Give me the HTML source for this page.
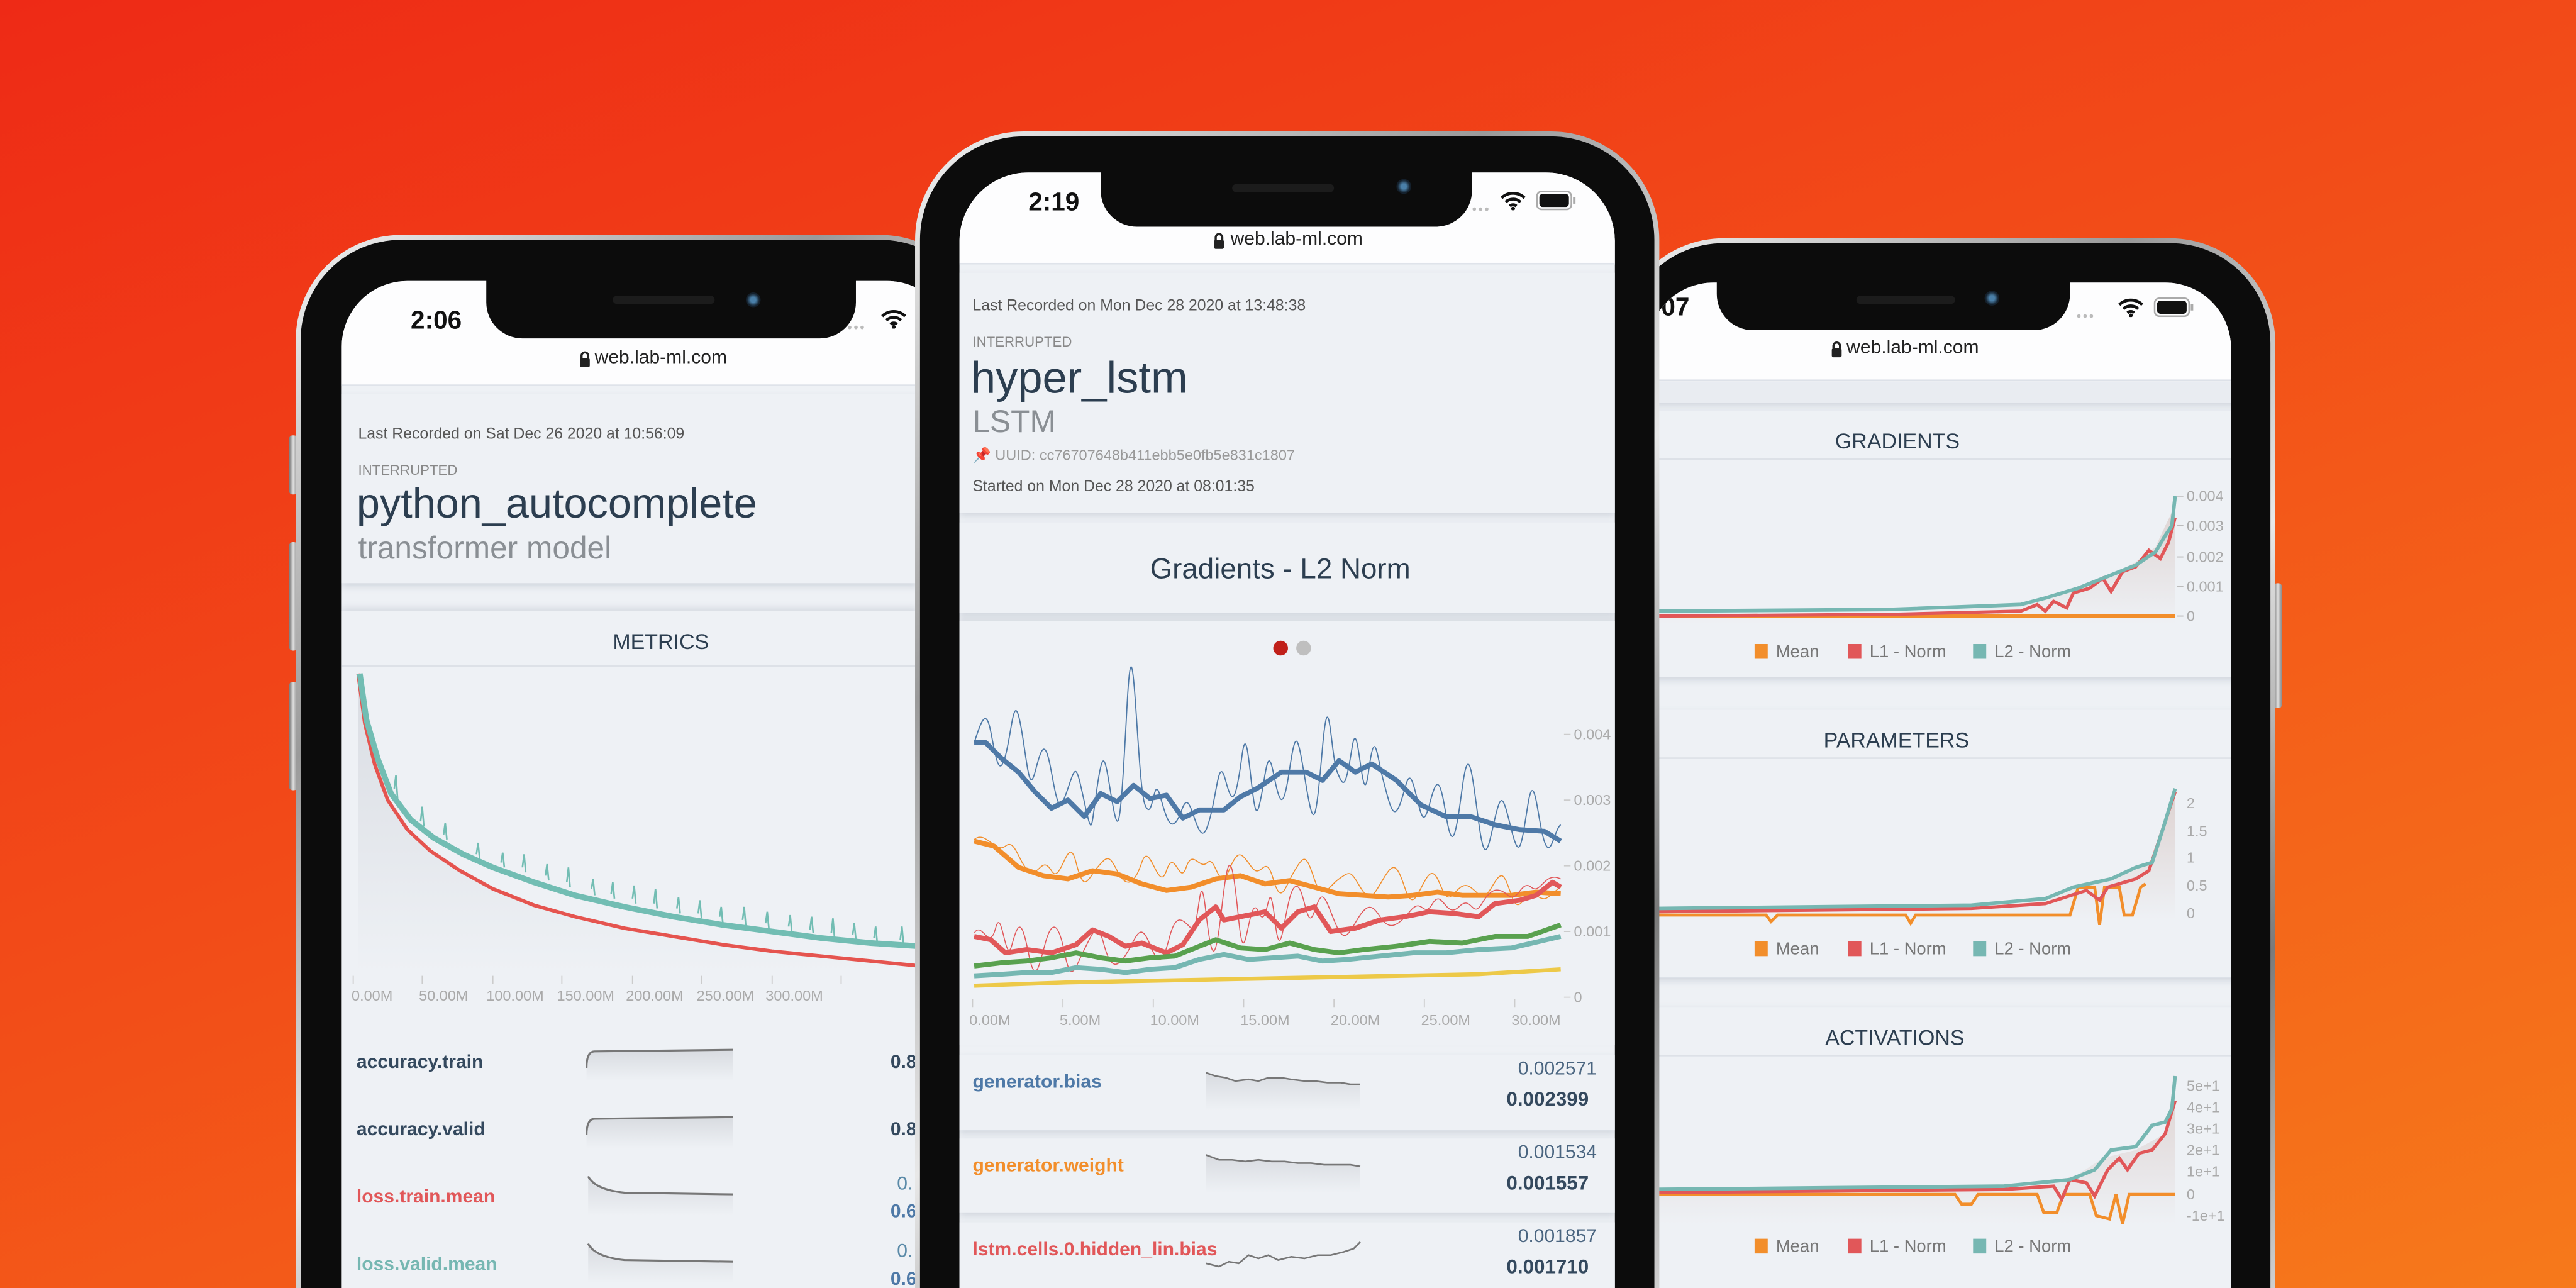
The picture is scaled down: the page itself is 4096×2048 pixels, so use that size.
<!DOCTYPE html>
<html><head><meta charset="utf-8"><style>
*{margin:0;padding:0;box-sizing:border-box}
html,body{width:4096px;height:2048px;overflow:hidden}
body{background:linear-gradient(160deg,#ee2a16 0%,#f24c18 45%,#f6791b 100%);font-family:"Liberation Sans",sans-serif}
#s{position:absolute;left:0;top:0;width:1568px;height:784px;overflow:hidden;transform:scale(2.612245);transform-origin:0 0}
.ph{position:absolute;background:linear-gradient(135deg,#f2f2f2,#9a9a9a 30%,#e8e8e8 55%,#7a7a7a 80%,#d0d0d0)}
.bz{position:absolute;left:3px;top:3px;right:3px;bottom:0;background:#0c0c0c}
.sc{position:absolute;overflow:hidden;background:#eef1f5}
.g{position:absolute;left:0;top:0;width:1568px;height:784px}
.t{position:absolute;white-space:nowrap;line-height:1}
.card{position:absolute;background:#eef1f5;box-shadow:0 2px 4px rgba(120,130,150,.25)}
.wh{position:absolute;background:#fdfdfe;border-bottom:1px solid #dfe3ea}
.notch{position:absolute;background:#0c0c0c;border-radius:0 0 22px 22px}
.cam{position:absolute;width:9px;height:9px;border-radius:50%;background:radial-gradient(circle,#4a7fa8 25%,#14202c 60%)}
.spk{position:absolute;height:5px;border-radius:3px;background:#1c1c1c}
.btn{position:absolute;background:linear-gradient(90deg,#777,#ddd,#888);border-radius:2px}
.lg{position:absolute;font-size:10.5px;color:#777;white-space:nowrap;line-height:1}
.lg i{display:inline-block;width:8px;height:9px;margin:0 5px -1px 0}
.ax{font-size:9px;fill:#aaa;font-family:"Liberation Sans",sans-serif}
</style></head><body><div id="s">

<div class="btn" style="left:176px;top:265px;width:5px;height:36px"></div>
<div class="btn" style="left:176px;top:330px;width:5px;height:66px"></div>
<div class="btn" style="left:176px;top:415px;width:5px;height:66px"></div>
<div class="btn" style="left:1384px;top:355px;width:5px;height:76px"></div>

<!-- LEFT PHONE -->
<div class="ph" style="left:180px;top:143px;width:420px;height:641px;border-radius:64px 64px 0 0"><div class="bz" style="border-radius:61px 61px 0 0"></div></div>
<div class="sc" style="left:208px;top:171px;width:372px;height:613px;border-radius:40px 40px 0 0">
<div class="g" style="left:-208px;top:-171px">
 <div class="wh" style="left:208px;top:171px;width:380px;height:64px"></div>
 <div class="t" style="left:250px;top:188px;font-size:15.5px;font-weight:bold;color:#111">2:06</div>
 <div class="t" style="left:512px;top:196px;font-size:8px;color:#bbb;letter-spacing:1px">••••</div>
 <svg style="position:absolute;left:536px;top:188px" width="16" height="12" viewBox="0 0 16 12"><path d="M1 4.5a10 10 0 0 1 14 0M3.5 7a6.5 6.5 0 0 1 9 0M6 9.4a3 3 0 0 1 4 0" stroke="#111" stroke-width="1.8" fill="none"/><circle cx="8" cy="11" r="1.2" fill="#111"/></svg>
 <svg style="position:absolute;left:352px;top:213px" width="8" height="11" viewBox="0 0 8 11"><path d="M2 5V3.5a2 2 0 0 1 4 0V5" stroke="#222" stroke-width="1.3" fill="none"/><rect x="1" y="5" width="6" height="5.5" rx="1" fill="#222"/></svg>
 <div class="t" style="left:362px;top:213px;font-size:11.5px;color:#222">web.lab-ml.com</div>
 <div class="card" style="left:208px;top:240px;width:350px;height:115px"></div>
 <div class="t" style="left:218px;top:260px;font-size:9.5px;color:#555">Last Recorded on Sat Dec 26 2020 at 10:56:09</div>
 <div class="t" style="left:218px;top:282px;font-size:8.5px;color:#888">INTERRUPTED</div>
 <div class="t" style="left:217px;top:295px;font-size:25.5px;color:#2c3e50">python_autocomplete</div>
 <div class="t" style="left:218px;top:325px;font-size:19px;color:#8a8f94">transformer model</div>
 <div class="card" style="left:208px;top:372px;width:350px;height:430px;box-shadow:0 -2px 4px rgba(120,130,150,.2)"></div>
 <div class="t" style="left:373px;top:384px;font-size:13px;color:#2c3e50">METRICS</div>
 <div style="position:absolute;left:208px;top:405px;width:350px;height:1px;background:#dde1e7"></div>
 <svg style="position:absolute;left:0;top:0" width="1568" height="784">
  <defs><linearGradient id="lf" x1="0" y1="0" x2="0" y2="1"><stop offset="0" stop-color="#d9dce2"/><stop offset="1" stop-color="#eef1f5"/></linearGradient></defs>
  <path d="M218 410 L222 440 L228 465 L236 487 L248 505 L262 518 L280 530 L300 541 L325 551 L350 558 L380 565 L410 570 L440 575 L470 579 L500 582 L530 585 L560 588 L560 592 L218 592Z" fill="url(#lf)"/>
  <path d="M218 410 L222 440 L228 465 L236 487 L248 505 L262 518 L280 530 L300 541 L325 551 L350 558 L380 565 L410 570 L440 575 L470 579 L500 582 L530 585 L560 588" stroke="#e5544f" stroke-width="2.2" fill="none"/>
  <path d="M219 410 L223 438 L230 462 L238 483 L250 499 L264 510 L282 520 L300 528 L325 537 L350 545 L380 552 L410 558 L440 563 L470 567 L500 571 L530 574 L560 576" stroke="#72bdb3" stroke-width="3.5" fill="none"/>
  <path d="M240 480 l1 -8 l1 14 M256 500 l1 -9 l1 12 M270 508 l1 -7 l1 10 M290 520 l1 -7 l1 10 M305 525 l1 -6 l1 9 M318 528 l1 -8 l1 11 M332 533 l1 -7 l1 10 M345 537 l1 -9 l1 12 M360 541 l1 -6 l1 10 M372 544 l1 -7 l1 10 M385 547 l1 -8 l1 11 M398 550 l1 -9 l1 12 M412 553 l1 -7 l1 10 M425 556 l1 -8 l1 11 M438 558 l1 -6 l1 10 M452 560 l1 -8 l1 12 M466 562 l1 -7 l1 10 M480 564 l1 -7 l1 11 M493 566 l1 -8 l1 10 M506 568 l1 -9 l1 12 M519 569 l1 -7 l1 10 M532 571 l1 -7 l1 10 M548 572 l1 -8 l1 11" stroke="#72bdb3" stroke-width="1" fill="none"/>
  <g stroke="#ccc" stroke-width=".7"><path d="M215 594v5M257 594v5M300 594v5M342 594v5M385 594v5M427 594v5M470 594v5M512 594v5"/></g>
  <g class="ax"><text x="214" y="609">0.00M</text><text x="255" y="609">50.00M</text><text x="296" y="609">100.00M</text><text x="339" y="609">150.00M</text><text x="381" y="609">200.00M</text><text x="424" y="609">250.00M</text><text x="466" y="609">300.00M</text></g>
  <defs><linearGradient id="sp" x1="0" y1="0" x2="0" y2="1"><stop offset="0" stop-color="#d8dbe0"/><stop offset="1" stop-color="#eef1f5"/></linearGradient></defs>
  <path d="M357 650 Q357 640 362 640 L446 639 L446 658 L357 658Z" fill="url(#sp)"/><path d="M357 650 Q357 640 362 640 L446 639" stroke="#777" stroke-width="1.2" fill="none"/>
  <path d="M357 691 Q357 681 362 681 L446 680 L446 699 L357 699Z" fill="url(#sp)"/><path d="M357 691 Q357 681 362 681 L446 680" stroke="#777" stroke-width="1.2" fill="none"/>
  <path d="M358 716 Q362 724 380 726 L446 727 L446 740 L358 740Z" fill="url(#sp)"/><path d="M358 716 Q362 724 380 726 L446 727" stroke="#777" stroke-width="1.2" fill="none"/>
  <path d="M358 757 Q362 765 380 767 L446 768 L446 781 L358 781Z" fill="url(#sp)"/><path d="M358 757 Q362 765 380 767 L446 768" stroke="#777" stroke-width="1.2" fill="none"/>
 </svg>
 <div class="t" style="left:217px;top:642px;font-size:11.5px;font-weight:bold;color:#34495e">accuracy.train</div>
 <div class="t" style="left:217px;top:683px;font-size:11.5px;font-weight:bold;color:#34495e">accuracy.valid</div>
 <div class="t" style="left:217px;top:724px;font-size:11.5px;font-weight:bold;color:#e15759">loss.train.mean</div>
 <div class="t" style="left:217px;top:765px;font-size:11.5px;font-weight:bold;color:#76b7b2">loss.valid.mean</div>
 <div class="t" style="left:542px;top:642px;font-size:11.5px;font-weight:bold;color:#34495e">0.8</div>
 <div class="t" style="left:542px;top:683px;font-size:11.5px;font-weight:bold;color:#34495e">0.8</div>
 <div class="t" style="left:546px;top:716px;font-size:11.5px;color:#5a8aa8">0.</div>
 <div class="t" style="left:542px;top:733px;font-size:11.5px;font-weight:bold;color:#4e79a7">0.6</div>
 <div class="t" style="left:546px;top:757px;font-size:11.5px;color:#5a8aa8">0.</div>
 <div class="t" style="left:542px;top:774px;font-size:11.5px;font-weight:bold;color:#4e79a7">0.6</div>
</div></div>
<div class="notch" style="left:296px;top:170px;width:225px;height:36px"></div>
<div class="spk" style="left:373px;top:180px;width:62px"></div>
<div class="cam" style="left:454px;top:178px"></div>

<!-- RIGHT PHONE -->
<div class="ph" style="left:985px;top:145px;width:400px;height:639px;border-radius:64px 64px 0 0"><div class="bz" style="border-radius:61px 61px 0 0"></div></div>
<div class="sc" style="left:1003px;top:172px;width:355px;height:612px;border-radius:40px 40px 0 0">
<div class="g" style="left:-1003px;top:-172px">
 <div class="wh" style="left:1003px;top:172px;width:360px;height:60px"></div>
 <div class="t" style="left:1006px;top:180px;font-size:15.5px;font-weight:bold;color:#111">:07</div>
 <div class="t" style="left:1264px;top:189px;font-size:8px;color:#bbb;letter-spacing:1px">•••</div>
 <svg style="position:absolute;left:1289px;top:181px" width="16" height="12" viewBox="0 0 16 12"><path d="M1 4.5a10 10 0 0 1 14 0M3.5 7a6.5 6.5 0 0 1 9 0M6 9.4a3 3 0 0 1 4 0" stroke="#111" stroke-width="1.8" fill="none"/><circle cx="8" cy="11" r="1.2" fill="#111"/></svg>
 <svg style="position:absolute;left:1311px;top:181px" width="25" height="12" viewBox="0 0 25 12"><rect x=".5" y=".5" width="21" height="11" rx="3" fill="none" stroke="#aaa"/><rect x="2" y="2" width="18" height="8" rx="2" fill="#111"/><rect x="22.5" y="4" width="1.5" height="4" fill="#aaa"/></svg>
 <svg style="position:absolute;left:1114px;top:207px" width="8" height="11" viewBox="0 0 8 11"><path d="M2 5V3.5a2 2 0 0 1 4 0V5" stroke="#222" stroke-width="1.3" fill="none"/><rect x="1" y="5" width="6" height="5.5" rx="1" fill="#222"/></svg>
 <div class="t" style="left:1124px;top:207px;font-size:11.5px;color:#222">web.lab-ml.com</div>
 <div class="card" style="left:1003px;top:233px;width:360px;height:12px;background:#e9ecf1"></div>
 <div class="card" style="left:1003px;top:250px;width:360px;height:162px"></div>
 <div class="t" style="left:1117px;top:262px;font-size:13px;color:#2c3e50">GRADIENTS</div>
 <div style="position:absolute;left:1003px;top:279px;width:360px;height:1px;background:#dde1e7"></div>
 <div class="card" style="left:1003px;top:432px;width:360px;height:163px"></div>
 <div class="t" style="left:1110px;top:444px;font-size:13px;color:#2c3e50">PARAMETERS</div>
 <div style="position:absolute;left:1003px;top:461px;width:360px;height:1px;background:#dde1e7"></div>
 <div class="card" style="left:1003px;top:613px;width:360px;height:190px"></div>
 <div class="t" style="left:1111px;top:625px;font-size:13px;color:#2c3e50">ACTIVATIONS</div>
 <div style="position:absolute;left:1003px;top:642px;width:360px;height:1px;background:#dde1e7"></div>
 <svg style="position:absolute;left:0;top:0" width="1568" height="784">
  <defs><linearGradient id="rf" x1="0" y1="0" x2="0" y2="1"><stop offset="0" stop-color="#d9c9c6"/><stop offset="1" stop-color="#eef1f5"/></linearGradient></defs>
  <path d="M1005 372 L1200 369 L1240 366 L1265 358 L1285 350 L1300 342 L1312 333 L1318 320 L1322 312 L1324 302 L1324 380 L1005 380Z" fill="url(#rf)" opacity=".8"/>
  <path d="M1005 375 L1324 375" stroke="#f28e2b" stroke-width="2" fill="none"/>
  <path d="M1005 375 L1150 374 L1230 372 L1240 368 L1245 372 L1250 366 L1258 370 L1262 361 L1272 358 L1280 352 L1285 360 L1292 348 L1300 345 L1308 335 L1315 340 L1320 330 L1324 315" stroke="#e15759" stroke-width="2" fill="none"/>
  <path d="M1005 372 L1150 371 L1230 368 L1245 364 L1265 358 L1285 350 L1300 344 L1312 336 L1318 326 L1322 320 L1324 302" stroke="#76b7b2" stroke-width="2.2" fill="none"/>
  <g stroke="#bbb" stroke-width=".7"><path d="M1325 302h4M1325 320h4M1325 339h4M1325 357h4M1325 375h4"/></g>
  <g class="ax"><text x="1331" y="305">0.004</text><text x="1331" y="323">0.003</text><text x="1331" y="342">0.002</text><text x="1331" y="360">0.001</text><text x="1331" y="378">0</text></g>
  <path d="M1005 553 L1200 551 L1245 547 L1262 540 L1285 535 L1300 528 L1310 525 L1318 500 L1324 480 L1324 560 L1005 560Z" fill="url(#rf)" opacity=".8"/>
  <path d="M1005 557 L1075 557 L1078 561 L1082 557 L1160 557 L1163 562 L1166 557 L1260 557 L1265 540 L1275 540 L1278 563 L1281 540 L1290 540 L1293 557 L1298 557 L1303 540 L1306 538" stroke="#f28e2b" stroke-width="1.8" fill="none"/>
  <path d="M1005 555 L1200 553 L1245 550 L1270 542 L1278 548 L1283 540 L1300 535 L1308 530 L1318 500 L1324 482" stroke="#e15759" stroke-width="2" fill="none"/>
  <path d="M1005 553 L1200 551 L1245 547 L1262 540 L1285 535 L1300 528 L1310 525 L1318 500 L1324 480" stroke="#76b7b2" stroke-width="2.2" fill="none"/>
  <g class="ax"><text x="1331" y="492">2</text><text x="1331" y="509">1.5</text><text x="1331" y="525">1</text><text x="1331" y="542">0.5</text><text x="1331" y="559">0</text></g>
  <path d="M1005 726 L1230 724 L1260 718 L1280 705 L1300 700 L1318 690 L1324 655 L1324 745 L1005 745Z" fill="url(#rf)" opacity=".8"/>
  <path d="M1005 727 L1190 727 L1194 733 L1200 733 L1204 727 L1240 727 L1244 738 L1252 738 L1256 727 L1272 727 L1276 740 L1284 742 L1288 727 L1292 745 L1296 727 L1324 727" stroke="#f28e2b" stroke-width="1.8" fill="none"/>
  <path d="M1005 726 L1220 724 L1250 722 L1255 730 L1260 718 L1270 720 L1275 728 L1283 712 L1290 705 L1295 712 L1302 702 L1310 700 L1318 690 L1324 670" stroke="#e15759" stroke-width="2" fill="none"/>
  <path d="M1005 724 L1220 722 L1260 718 L1275 712 L1285 700 L1300 698 L1310 685 L1318 683 L1322 675 L1324 655" stroke="#76b7b2" stroke-width="2.2" fill="none"/>
  <g class="ax"><text x="1331" y="664">5e+1</text><text x="1331" y="677">4e+1</text><text x="1331" y="690">3e+1</text><text x="1331" y="703">2e+1</text><text x="1331" y="716">1e+1</text><text x="1331" y="730">0</text><text x="1331" y="743">-1e+1</text></g>
 </svg>
 <div class="lg" style="left:1068px;top:392px"><i style="background:#f28e2b"></i>Mean</div>
 <div class="lg" style="left:1125px;top:392px"><i style="background:#e15759"></i>L1 - Norm</div>
 <div class="lg" style="left:1201px;top:392px"><i style="background:#76b7b2"></i>L2 - Norm</div>
 <div class="lg" style="left:1068px;top:573px"><i style="background:#f28e2b"></i>Mean</div>
 <div class="lg" style="left:1125px;top:573px"><i style="background:#e15759"></i>L1 - Norm</div>
 <div class="lg" style="left:1201px;top:573px"><i style="background:#76b7b2"></i>L2 - Norm</div>
 <div class="lg" style="left:1068px;top:754px"><i style="background:#f28e2b"></i>Mean</div>
 <div class="lg" style="left:1125px;top:754px"><i style="background:#e15759"></i>L1 - Norm</div>
 <div class="lg" style="left:1201px;top:754px"><i style="background:#76b7b2"></i>L2 - Norm</div>
</div></div>
<div class="notch" style="left:1045px;top:170px;width:215px;height:31px"></div>
<div class="spk" style="left:1130px;top:180px;width:60px"></div>
<div class="cam" style="left:1208px;top:177px"></div>

<!-- CENTER PHONE -->
<div class="ph" style="left:557px;top:80px;width:453px;height:704px;border-radius:66px 66px 0 0"><div class="bz" style="border-radius:63px 63px 0 0"></div></div>
<div class="sc" style="left:584px;top:105px;width:399px;height:679px;border-radius:42px 42px 0 0">
<div class="g" style="left:-584px;top:-105px">
 <div class="wh" style="left:584px;top:105px;width:399px;height:56px"></div>
 <div class="t" style="left:626px;top:116px;font-size:15.5px;font-weight:bold;color:#111">2:19</div>
 <div class="t" style="left:896px;top:124px;font-size:8px;color:#bbb;letter-spacing:1px">•••</div>
 <svg style="position:absolute;left:913px;top:116px" width="16" height="12" viewBox="0 0 16 12"><path d="M1 4.5a10 10 0 0 1 14 0M3.5 7a6.5 6.5 0 0 1 9 0M6 9.4a3 3 0 0 1 4 0" stroke="#111" stroke-width="1.8" fill="none"/><circle cx="8" cy="11" r="1.2" fill="#111"/></svg>
 <svg style="position:absolute;left:935px;top:116px" width="25" height="12" viewBox="0 0 25 12"><rect x=".5" y=".5" width="21" height="11" rx="3" fill="none" stroke="#aaa"/><rect x="2" y="2" width="18" height="8" rx="2" fill="#111"/><rect x="22.5" y="4" width="1.5" height="4" fill="#aaa"/></svg>
 <svg style="position:absolute;left:738px;top:141px" width="8" height="11" viewBox="0 0 8 11"><path d="M2 5V3.5a2 2 0 0 1 4 0V5" stroke="#222" stroke-width="1.3" fill="none"/><rect x="1" y="5" width="6" height="5.5" rx="1" fill="#222"/></svg>
 <div class="t" style="left:749px;top:141px;font-size:11.5px;color:#222">web.lab-ml.com</div>
 <div class="card" style="left:584px;top:166px;width:399px;height:146px"></div>
 <div class="t" style="left:592px;top:182px;font-size:9.5px;color:#555">Last Recorded on Mon Dec 28 2020 at 13:48:38</div>
 <div class="t" style="left:592px;top:204px;font-size:8.5px;color:#888">INTERRUPTED</div>
 <div class="t" style="left:591px;top:217px;font-size:27px;color:#2c3e50">hyper_lstm</div>
 <div class="t" style="left:592px;top:248px;font-size:19px;color:#8a8f94">LSTM</div>
 <div class="t" style="left:592px;top:273px;font-size:9px;color:#999"><span style="color:#e15759">📌</span> UUID: cc76707648b411ebb5e0fb5e831c1807</div>
 <div class="t" style="left:592px;top:292px;font-size:9.5px;color:#555">Started on Mon Dec 28 2020 at 08:01:35</div>
 <div class="card" style="left:584px;top:318px;width:399px;height:55px"></div>
 <div class="t" style="left:700px;top:338px;font-size:17.5px;color:#2c3e50">Gradients - L2 Norm</div>
 <div class="card" style="left:584px;top:378px;width:399px;height:258px;box-shadow:0 -2px 3px rgba(120,130,150,.15)"></div>
 <div style="position:absolute;left:775px;top:390px;width:9px;height:9px;border-radius:50%;background:#c0201a"></div>
 <div style="position:absolute;left:789px;top:390px;width:9px;height:9px;border-radius:50%;background:#bfbfbf"></div>
 <svg style="position:absolute;left:0;top:0" width="1568" height="784">
  <g fill="none" stroke-linejoin="round">
  <path d="M593 452 C597 440 600 430 603 445 S608 475 612 460 S617 420 621 440 S626 485 630 470 S636 448 640 470 S645 495 650 480 S655 465 660 488 S664 505 668 478 S673 465 677 488 S682 505 686 430 S692 478 697 490 S702 470 706 484 S712 505 716 500 S721 480 726 495 S733 512 737 496 S742 460 746 475 S752 490 756 460 S762 505 766 492 S771 450 775 470 S781 495 785 468 S790 448 795 478 S801 500 805 455 S810 460 814 470 S819 480 823 455 S829 500 833 470 S838 460 842 475 S848 500 852 490 S857 465 861 480 S866 505 870 490 S876 470 880 495 S886 510 890 480 S896 470 900 500 S906 515 910 498 S915 485 920 505 S926 515 930 490 S936 500 940 512 S946 505 950 502" stroke="#4e79a7" stroke-width=".7"/>
  <path d="M593 452 L600 452 L610 462 L620 470 L630 482 L640 492 L650 487 L660 497 L670 483 L680 488 L690 478 L700 486 L710 484 L720 498 L730 493 L745 493 L755 485 L765 480 L780 470 L795 470 L805 475 L815 463 L825 470 L835 465 L850 475 L865 490 L880 497 L895 497 L910 502 L925 505 L940 506 L950 512" stroke="#4e79a7" stroke-width="3"/>
  <path d="M593 511 C600 505 606 520 612 515 S620 525 626 530 S634 520 640 530 S650 505 655 525 S662 535 668 528 S675 520 680 530 S690 540 695 525 S705 545 710 530 S718 540 722 528 S730 530 735 525 S742 545 748 530 S756 520 762 528 S770 518 775 535 S782 540 788 530 S795 520 800 535 S808 540 815 535 S822 530 828 540 S836 545 842 535 S850 525 855 540 S862 545 868 535 S876 540 880 545 S888 535 895 540 S902 550 908 540 S915 530 920 545 S928 540 935 545 S942 545 950 540" stroke="#f28e2b" stroke-width=".6"/>
  <path d="M593 512 L605 515 L620 528 L635 533 L650 535 L665 530 L680 532 L695 538 L710 542 L725 540 L740 535 L755 533 L770 538 L785 536 L800 540 L815 544 L830 545 L845 546 L860 545 L875 543 L890 545 L905 545 L920 545 L935 543 L950 544" stroke="#f28e2b" stroke-width="3"/>
  <path d="M593 568 C598 560 602 580 606 565 S612 590 616 575 S622 560 626 580 S632 590 636 575 S644 560 648 580 S654 590 660 578 S668 560 672 575 S680 590 686 580 S694 560 700 575 S708 585 712 570 S720 560 725 565 S730 520 734 555 S740 585 744 550 S750 520 754 560 S760 540 766 555 S772 525 776 560 S782 545 788 540 S795 570 800 555 S806 545 812 560 S820 570 826 560 S835 550 840 558 S850 565 858 555 S866 560 872 550 S880 560 888 552 S896 560 902 550 S912 540 918 545 S926 535 932 540 S940 530 950 535" stroke="#e15759" stroke-width=".6"/>
  <path d="M593 570 L603 572 L612 580 L625 578 L640 580 L655 575 L665 566 L675 570 L685 576 L695 574 L710 580 L720 575 L730 560 L740 552 L745 560 L755 558 L770 555 L780 565 L790 555 L800 552 L810 567 L825 565 L840 560 L855 558 L870 555 L885 556 L900 558 L910 550 L925 548 L935 545 L945 537 L950 540" stroke="#e15759" stroke-width="3"/>
  <path d="M593 588 L610 586 L625 585 L640 583 L655 580 L670 583 L685 585 L700 583 L715 582 L730 576 L740 572 L755 577 L770 578 L785 574 L800 578 L815 580 L830 578 L850 576 L870 573 L890 574 L910 570 L930 570 L950 563" stroke="#59a14f" stroke-width="3"/>
  <path d="M593 594 L610 593 L625 592 L640 592 L655 589 L670 590 L685 592 L700 590 L715 589 L730 584 L745 581 L760 584 L775 583 L790 582 L805 585 L820 584 L840 582 L860 580 L880 580 L900 578 L920 577 L950 570" stroke="#76b7b2" stroke-width="3"/>
  <path d="M593 600 L650 598 L700 597 L750 596 L800 595 L850 594 L900 593 L950 590" stroke="#edc948" stroke-width="2.5"/>
  </g>
  <g stroke="#ccc" stroke-width=".7"><path d="M592 608v5M647 608v5M702 608v5M757 608v5M812 608v5M867 608v5M922 608v5M952 447h4M952 487h4M952 527h4M952 567h4M952 607h4"/></g>
  <g class="ax"><text x="590" y="624">0.00M</text><text x="645" y="624">5.00M</text><text x="700" y="624">10.00M</text><text x="755" y="624">15.00M</text><text x="810" y="624">20.00M</text><text x="865" y="624">25.00M</text><text x="920" y="624">30.00M</text><text x="958" y="450">0.004</text><text x="958" y="490">0.003</text><text x="958" y="530">0.002</text><text x="958" y="570">0.001</text><text x="958" y="610">0</text></g>
 </svg>
 <div class="card" style="left:584px;top:642px;width:399px;height:46px"></div>
 <div class="card" style="left:584px;top:693px;width:399px;height:45px"></div>
 <div class="card" style="left:584px;top:744px;width:399px;height:60px"></div>
 <svg style="position:absolute;left:0;top:0" width="1568" height="784">
  <defs><linearGradient id="sp2" x1="0" y1="0" x2="0" y2="1"><stop offset="0" stop-color="#d8dbe0"/><stop offset="1" stop-color="#eef1f5"/></linearGradient></defs>
  <path d="M734 653 L740 655 L746 656 L752 658 L760 657 L766 658 L772 656 L780 656 L786 657 L794 658 L800 658 L808 659 L816 659 L822 660 L828 660 L828 676 L734 676Z" fill="url(#sp2)"/>
  <path d="M734 653 L740 655 L746 656 L752 658 L760 657 L766 658 L772 656 L780 656 L786 657 L794 658 L800 658 L808 659 L816 659 L822 660 L828 660" stroke="#777" stroke-width="1" fill="none"/>
  <path d="M734 703 L742 706 L750 706 L758 707 L766 706 L774 707 L782 707 L790 708 L798 708 L806 709 L814 709 L822 709 L828 710 L828 726 L734 726Z" fill="url(#sp2)"/>
  <path d="M734 703 L742 706 L750 706 L758 707 L766 706 L774 707 L782 707 L790 708 L798 708 L806 709 L814 709 L822 709 L828 710" stroke="#777" stroke-width="1" fill="none"/>
  <path d="M734 769 L742 771 L748 768 L754 769 L760 764 L766 766 L772 764 L778 767 L786 765 L794 766 L802 764 L810 764 L818 762 L824 760 L828 756" stroke="#777" stroke-width="1" fill="none"/>
 </svg>
 <div class="t" style="left:592px;top:654px;font-size:11.5px;font-weight:bold;color:#4e79a7">generator.bias</div>
 <div class="t" style="left:592px;top:705px;font-size:11.5px;font-weight:bold;color:#f28e2b">generator.weight</div>
 <div class="t" style="left:592px;top:756px;font-size:11.5px;font-weight:bold;color:#e15759">lstm.cells.0.hidden_lin.bias</div>
 <div class="t" style="left:924px;top:646px;font-size:11.5px;color:#4a6580">0.002571</div>
 <div class="t" style="left:917px;top:663px;font-size:12px;font-weight:bold;color:#34495e">0.002399</div>
 <div class="t" style="left:924px;top:697px;font-size:11.5px;color:#4a6580">0.001534</div>
 <div class="t" style="left:917px;top:714px;font-size:12px;font-weight:bold;color:#34495e">0.001557</div>
 <div class="t" style="left:924px;top:748px;font-size:11.5px;color:#4a6580">0.001857</div>
 <div class="t" style="left:917px;top:765px;font-size:12px;font-weight:bold;color:#34495e">0.001710</div>
</div></div>
<div class="notch" style="left:670px;top:104px;width:226px;height:34px"></div>
<div class="spk" style="left:750px;top:112px;width:62px"></div>
<div class="cam" style="left:850px;top:109px"></div>

</div></body></html>
